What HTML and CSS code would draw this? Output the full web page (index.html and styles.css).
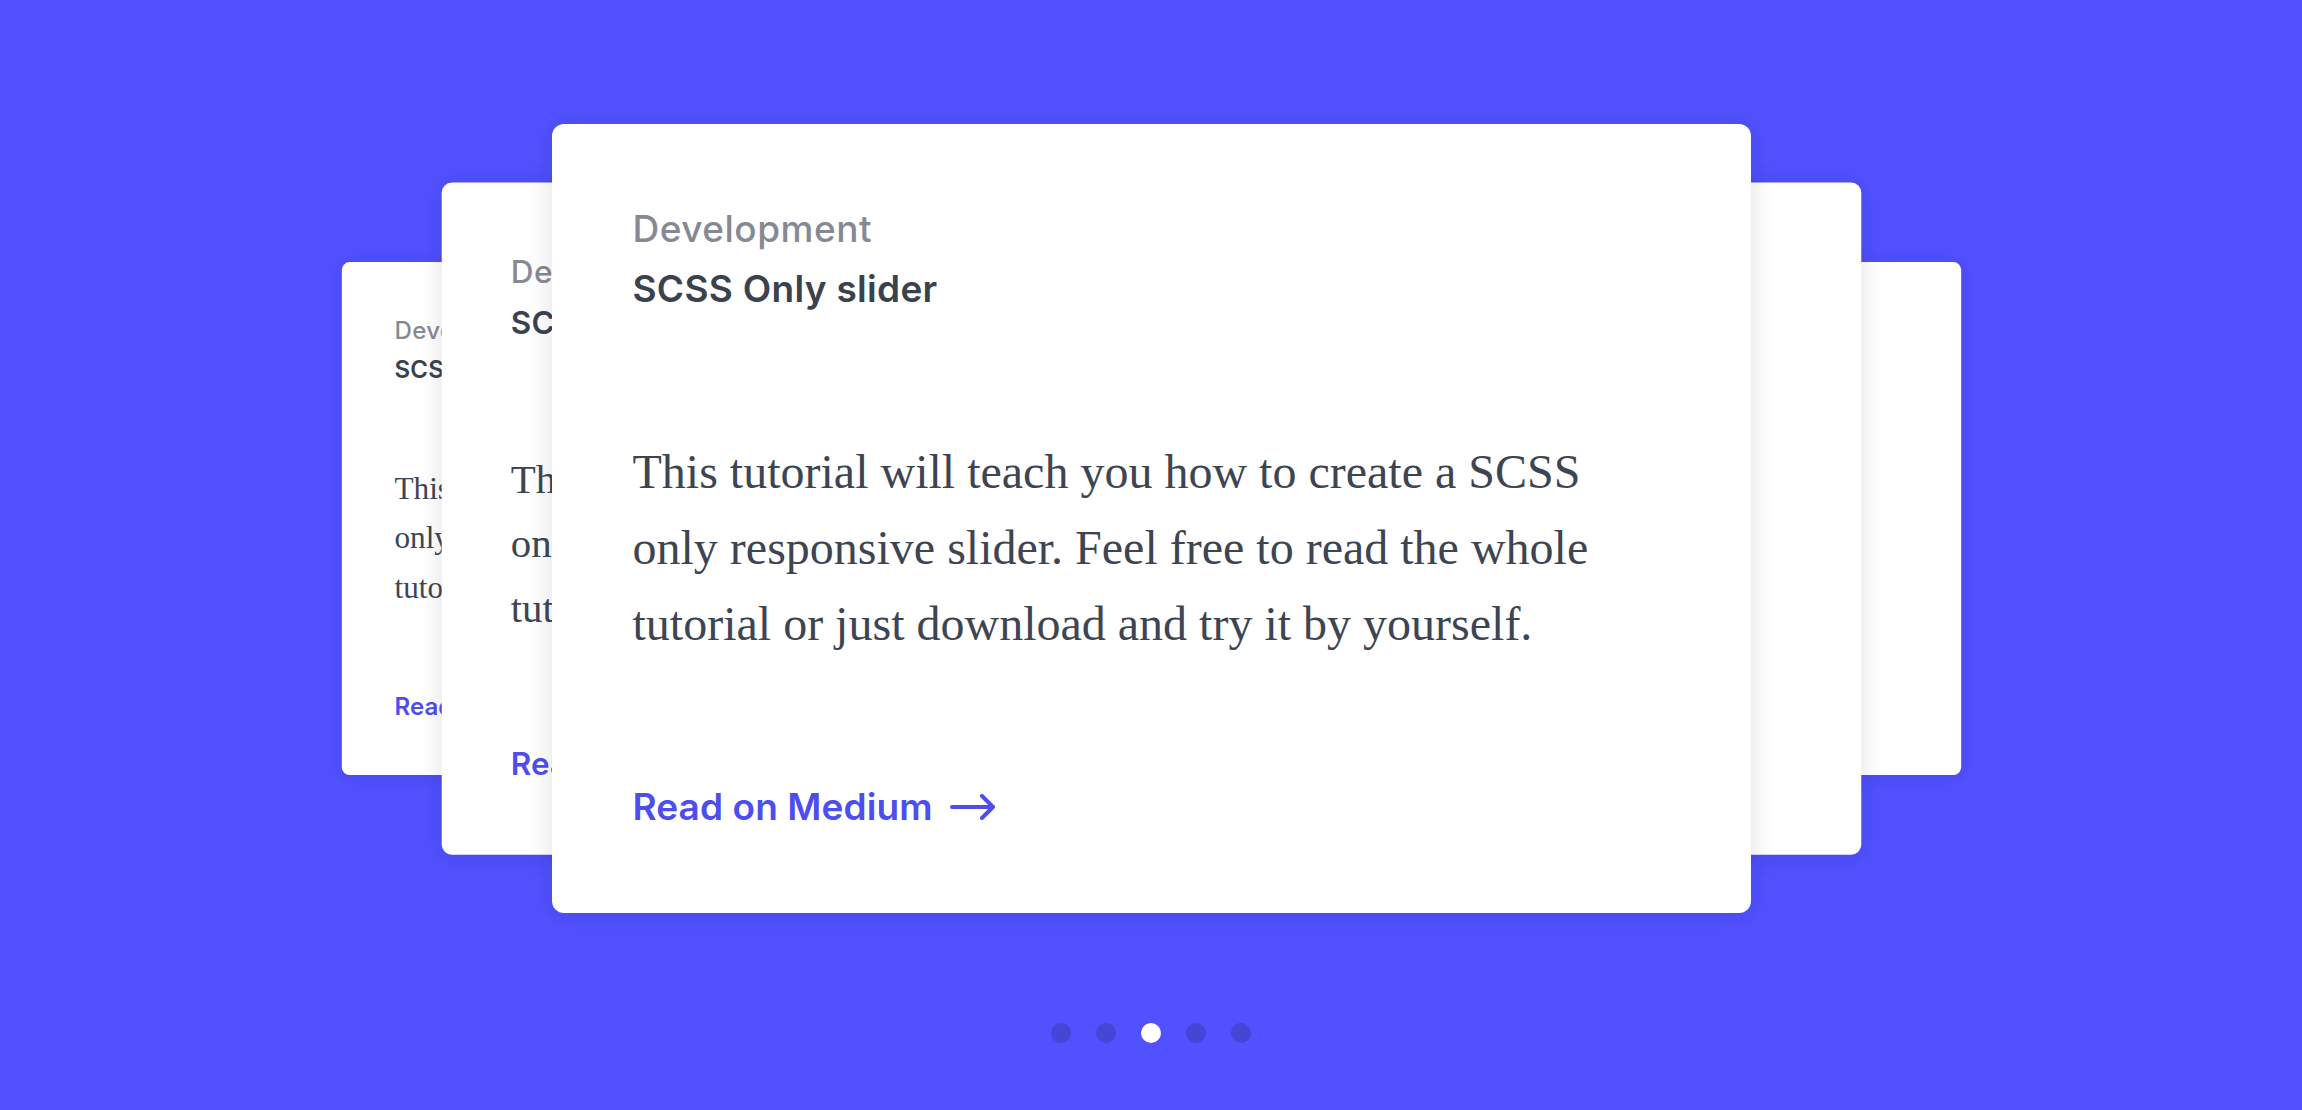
FILE: index.html
```html
<!DOCTYPE html>
<html lang="en">
<head>
    <meta charset="UTF-8">
    <meta name="viewport" content="width=device-width, initial-scale=1.0">
    <title>SCSS Only Slider</title>
    <link rel="stylesheet" href="styles.css">
</head>
<body>

<div class="slider">
    <!-- Far cards -->
    <div class="card far-left">
        <p class="card-category">Development</p>
        <h2 class="card-title">SCSS Only slider</h2>
        <p class="card-text">This tutorial will teach you how to create a SCSS only responsive slider. Feel free to read the whole tutorial or just download and try it by yourself.</p>
        <a href="#" class="card-link">Read on Medium <svg class="arrow" viewBox="0 0 46 26"><path d="M2 13H43M32 2L43 13L32 24"/></svg></a>
    </div>
    <div class="card far-right">
        <p class="card-category">Development</p>
        <h2 class="card-title">SCSS Only slider</h2>
        <p class="card-text">This tutorial will teach you how to create a SCSS only responsive slider. Feel free to read the whole tutorial or just download and try it by yourself.</p>
        <a href="#" class="card-link">Read on Medium <svg class="arrow" viewBox="0 0 46 26"><path d="M2 13H43M32 2L43 13L32 24"/></svg></a>
    </div>

    <!-- Near cards -->
    <div class="card near-left">
        <p class="card-category">Development</p>
        <h2 class="card-title">SCSS Only slider</h2>
        <p class="card-text">This tutorial will teach you how to create a SCSS only responsive slider. Feel free to read the whole tutorial or just download and try it by yourself.</p>
        <a href="#" class="card-link">Read on Medium <svg class="arrow" viewBox="0 0 46 26"><path d="M2 13H43M32 2L43 13L32 24"/></svg></a>
    </div>
    <div class="card near-right">
        <p class="card-category">Development</p>
        <h2 class="card-title">SCSS Only slider</h2>
        <p class="card-text">This tutorial will teach you how to create a SCSS only responsive slider. Feel free to read the whole tutorial or just download and try it by yourself.</p>
        <a href="#" class="card-link">Read on Medium <svg class="arrow" viewBox="0 0 46 26"><path d="M2 13H43M32 2L43 13L32 24"/></svg></a>
    </div>

    <!-- Active card -->
    <div class="card active">
        <p class="card-category">Development</p>
        <h2 class="card-title">SCSS Only slider</h2>
        <p class="card-text">This tutorial will teach you how to create a SCSS only responsive slider. Feel free to read the whole tutorial or just download and try it by yourself.</p>
        <a href="#" class="card-link">Read on Medium <svg class="arrow" viewBox="0 0 46 26"><path d="M2 13H43M32 2L43 13L32 24"/></svg></a>
    </div>
</div>

<div class="dots">
    <span class="dot"></span>
    <span class="dot"></span>
    <span class="dot current"></span>
    <span class="dot"></span>
    <span class="dot"></span>
</div>

</body>
</html>
```

FILE: styles.css
```css
body {
    margin: 0;
    padding: 0;
    background-color: #5151ff;
    display: flex;
    flex-direction: column;
    align-items: center;
    height: 100vh;
    overflow: hidden;
    font-family: 'Inter', 'Liberation Sans', sans-serif;
}

/* Slider: every card sits in the same grid cell */
.slider {
    display: grid;
    justify-items: center;
    margin-top: 124px;
    width: 100%;
}

.card {
    grid-area: 1 / 1;
    box-sizing: border-box;
    width: 1199px;
    padding: 83px 81px 84px;
    background-color: #fff;
    border-radius: 12px;
    box-shadow: 0 2px 26px rgba(20, 20, 60, 0.13);
    transform-origin: center center;
}

.card.active {
    z-index: 3;
}

.card.near-left {
    z-index: 2;
    transform: translateX(-199px) scale(0.852);
}

.card.near-right {
    z-index: 2;
    transform: translateX(199px) scale(0.852);
}

.card.far-left {
    z-index: 1;
    transform: translateX(-420px) scale(0.65);
}

.card.far-right {
    z-index: 1;
    transform: translateX(420px) scale(0.65);
}

.card-category {
    margin: 0;
    font-size: 37px;
    line-height: 1.2;
    font-weight: 500;
    letter-spacing: 0.5px;
    color: #868993;
}

.card-title {
    margin: 16px 0 0;
    font-size: 37px;
    line-height: 1.2;
    font-weight: 600;
    letter-spacing: 0.3px;
    color: #3a424e;
}

.card-text {
    margin: 122px 0 0;
    font-family: 'Liberation Serif', 'Times New Roman', serif;
    font-size: 48px;
    line-height: 76px;
    color: #3e4552;
}

.card-link {
    display: inline-flex;
    align-items: center;
    gap: 17px;
    margin-top: 123px;
    font-size: 37px;
    line-height: 1.2;
    font-weight: 600;
    letter-spacing: 0.1px;
    color: #4e4ef0;
    text-decoration: none;
}

.arrow {
    width: 46px;
    height: 26px;
    fill: none;
    stroke: currentColor;
    stroke-width: 4;
    stroke-linecap: round;
    stroke-linejoin: round;
}

/* Pagination dots */
.dots {
    display: flex;
    gap: 25px;
    margin-top: 110px;
}

.dot {
    width: 20px;
    height: 20px;
    border-radius: 50%;
    background-color: #4646d6;
}

.dot.current {
    background-color: #fff;
}
```
